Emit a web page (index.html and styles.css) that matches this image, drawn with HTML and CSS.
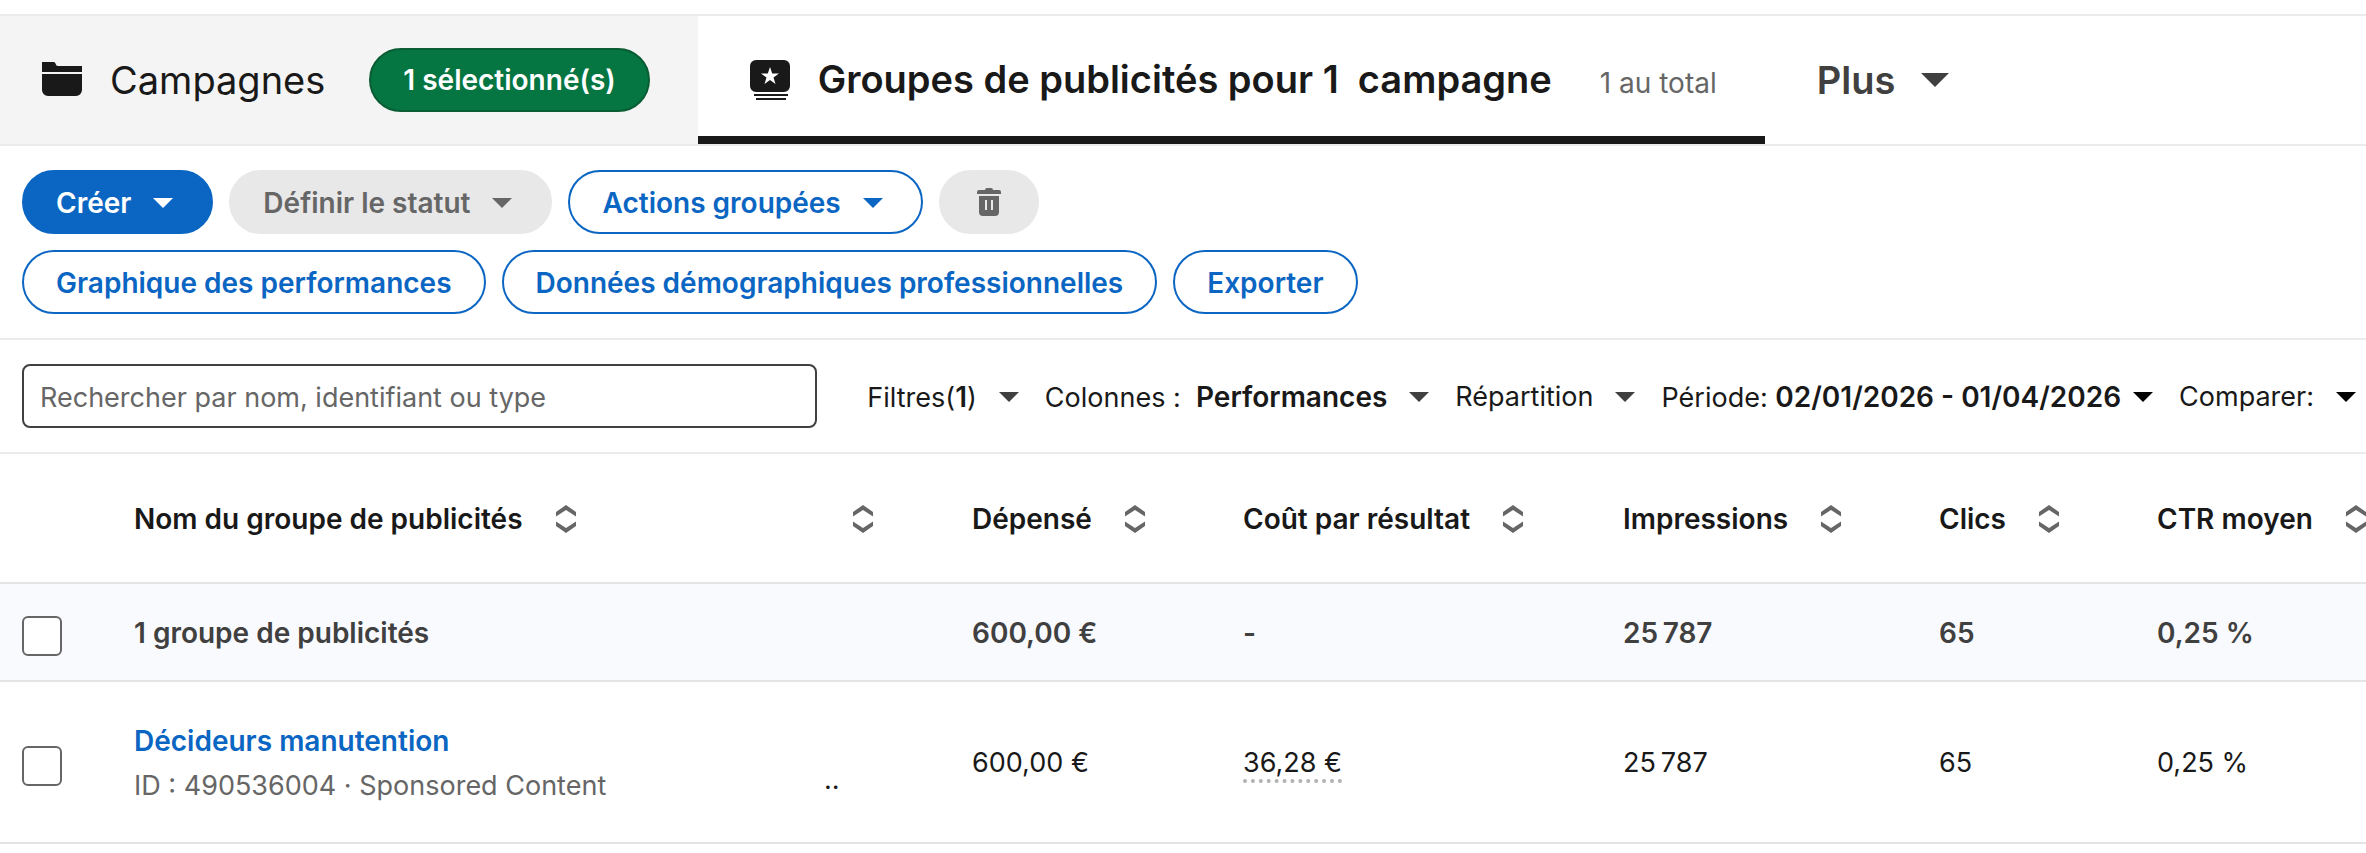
FILE: index.html
```html
<!DOCTYPE html>
<html lang="fr">

<head>
    <meta charset="UTF-8">
    <meta name="viewport" content="width=device-width, initial-scale=1.0">
    <title>Groupes de publicités</title>
    <link rel="stylesheet" href="styles.css">
</head>

<body>
    <!-- Icônes partagées -->
    <svg class="sprite" aria-hidden="true">
        <symbol id="caret" viewBox="0 0 20 10"><path d="M0 0h20L10 10z" /></symbol>
        <symbol id="sort" viewBox="0 0 22 28"><path d="M11 0l10 7v4.500L11 5 1 11.500V7zM11 28L1 21v-4.500L11 23l10-6.500V21z" /></symbol>
    </svg>

    <!-- Onglets -->
    <nav class="tabs">
        <a href="#" class="tab tab-campaigns">
            <svg class="tab-icon" viewBox="0 0 40 40"><path d="M0 2h12q1 0 1.500 1.500Q14 6 16 6h24v6H0zM0 14h40v16a6 6 0 0 1-6 6H6a6 6 0 0 1-6-6z" /></svg>
            <span class="tab-name">Campagnes</span>
            <span class="badge">1 sélectionné(s)</span>
        </a>
        <a href="#" class="tab tab-groups">
            <svg class="tab-icon" viewBox="0 0 40 40"><path fill-rule="evenodd" d="M6 0h28a6 6 0 0 1 6 6v20a6 6 0 0 1-6 6H6a6 6 0 0 1-6-6V6a6 6 0 0 1 6-6zM20 7l-2.200 6.500H11l5.500 4-2 6.500 5.500-4 5.500 4-2-6.500 5.500-4h-6.800z" /><path d="M4 34h34v2H4zM6 38h30v2H6z" /></svg>
            <span class="tab-label">
                <span class="tab-name">Groupes de publicités pour 1 &nbsp;campagne</span>
                <span class="total">1 au total</span>
            </span>
        </a>
        <button class="more">Plus <svg class="caret"><use href="#caret" /></svg></button>
    </nav>

    <!-- Barre d'actions -->
    <div class="toolbar">
        <div class="actions">
            <button class="btn btn-primary">Créer <svg class="caret"><use href="#caret" /></svg></button>
            <button class="btn" disabled>Définir le statut <svg class="caret"><use href="#caret" /></svg></button>
            <button class="btn">Actions groupées <svg class="caret"><use href="#caret" /></svg></button>
            <button class="btn" disabled aria-label="Supprimer">
                <svg class="trash" viewBox="0 0 32 32"><path fill-rule="evenodd" d="M12 3a2 2 0 0 1 2-2h4a2 2 0 0 1 2 2h6a2 2 0 0 1 2 2v2H4V5a2 2 0 0 1 2-2zM6 9h20v16a4 4 0 0 1-4 4H10a4 4 0 0 1-4-4zM12 13v10h2V13zM18 13v10h2V13z" /></svg>
            </button>
        </div>
        <div class="actions">
            <button class="btn">Graphique des performances</button>
            <button class="btn">Données démographiques professionnelles</button>
            <button class="btn">Exporter</button>
        </div>
    </div>

    <!-- Recherche et filtres -->
    <div class="filters">
        <input type="text" class="search" aria-label="Rechercher" placeholder="Rechercher par nom, identifiant ou type">
        <div class="filter-list">
            <button class="filter"><span>Filtres(<b>1</b>)</span><svg class="caret"><use href="#caret" /></svg></button>
            <button class="filter"><span>Colonnes : &nbsp;<b>Performances</b></span><svg class="caret"><use href="#caret" /></svg></button>
            <button class="filter"><span>Répartition</span><svg class="caret"><use href="#caret" /></svg></button>
            <button class="filter dark period"><span>Période: <b>02/01/2026 - 01/04/2026</b></span><svg class="caret"><use href="#caret" /></svg></button>
            <button class="filter dark"><span>Comparer:</span><svg class="caret"><use href="#caret" /></svg></button>
        </div>
    </div>

    <table class="report">
        <colgroup>
            <col class="col-check">
            <col class="col-name">
            <col class="col-status">
            <col class="col-spent">
            <col class="col-cost">
            <col class="col-impressions">
            <col class="col-clicks">
            <col class="col-ctr">
        </colgroup>
        <thead>
            <tr>
                <td></td>
                <th><button class="sort">Nom du groupe de publicités<svg><use href="#sort" /></svg></button></th>
                <th class="status"><button class="sort" aria-label="Trier"><svg><use href="#sort" /></svg></button></th>
                <th><button class="sort">Dépensé<svg><use href="#sort" /></svg></button></th>
                <th><button class="sort">Coût par résultat<svg><use href="#sort" /></svg></button></th>
                <th><button class="sort">Impressions<svg><use href="#sort" /></svg></button></th>
                <th><button class="sort">Clics<svg><use href="#sort" /></svg></button></th>
                <th><button class="sort">CTR moyen<svg><use href="#sort" /></svg></button></th>
            </tr>
        </thead>
        <tbody>
            <tr class="summary">
                <td><input type="checkbox" class="check" aria-label="Tout sélectionner"></td>
                <td>1 groupe de publicités</td>
                <td></td>
                <td>600,00 €</td>
                <td>-</td>
                <td>25&#8239;787</td>
                <td>65</td>
                <td>0,25 %</td>
            </tr>
            <tr class="item">
                <td><input type="checkbox" class="check" aria-label="Sélectionner Décideurs manutention"></td>
                <td>
                    <a href="#" class="group-name">Décideurs manutention</a>
                    <div class="group-id">ID : 490536004 · Sponsored Content</div>
                </td>
                <td class="dots">..</td>
                <td>600,00 €</td>
                <td><span class="hint">36,28 €</span></td>
                <td>25&#8239;787</td>
                <td>65</td>
                <td>0,25 %</td>
            </tr>
        </tbody>
    </table>
</body>

</html>
```
FILE: styles.css
```css
/* Base */
* {
    box-sizing: border-box;
}

body {
    margin: 0;
    padding-top: 14px;
    font-family: Inter, "Liberation Sans", sans-serif;
    font-size: 27px;
    line-height: 40px;
    color: #191919;
    background: #fff;
    overflow-x: hidden;
}

button,
input {
    font: inherit;
    color: inherit;
}

button {
    padding: 0;
    border: none;
    background: none;
    white-space: nowrap;
    cursor: pointer;
}

a {
    color: inherit;
    text-decoration: none;
}

b {
    font-size: 28px;
    font-weight: 600;
}

svg {
    flex: none;
    fill: currentColor;
}

.sprite {
    display: none;
}

.caret {
    width: 20px;
    height: 10px;
}

/* Onglets */
.tabs {
    display: flex;
    height: 132px;
    border-top: 2px solid #ebebeb;
    border-bottom: 2px solid #ebebeb;
}

.tab {
    display: flex;
    align-items: center;
    font-size: 38px;
    white-space: nowrap;
}

.tab-campaigns {
    padding: 0 48px 0 42px;
    background: #f4f4f4;
}

.tab-groups {
    padding: 8px 48px 0 52px;
    border-bottom: 8px solid #191919;
    font-weight: 600;
}

.tab-icon {
    width: 40px;
    height: 40px;
    margin-right: 28px;
}

.tab-label {
    display: flex;
    align-items: baseline;
    padding-top: 2px;
}

.badge {
    margin-left: 44px;
    padding: 10px 32px;
    border: 2px solid #0a5c33;
    border-radius: 32px;
    background: #057642;
    color: #fff;
    font-size: 28px;
    font-weight: 600;
}

.total {
    margin-left: 48px;
    color: #666;
    font-size: 28px;
    font-weight: 400;
}

.more {
    display: flex;
    align-items: center;
    gap: 26px;
    padding: 0 52px;
    color: #404040;
    font-size: 38px;
    font-weight: 600;
}

.more .caret {
    width: 28px;
    height: 14px;
}

/* Barre d'actions */
.toolbar {
    display: flex;
    flex-direction: column;
    gap: 16px;
    padding: 24px 22px;
    border-bottom: 2px solid #ebebeb;
}

.actions {
    display: flex;
    gap: 16px;
}

.btn {
    display: flex;
    align-items: center;
    gap: 22px;
    height: 64px;
    padding: 2px 32px 0;
    border: 2px solid #0a66c2;
    border-radius: 32px;
    color: #0a66c2;
    font-size: 28px;
    font-weight: 600;
}

.btn .caret {
    margin-right: 6px;
}

.btn-primary {
    background: #0a66c2;
    color: #fff;
}

.btn:disabled {
    border-color: #e8e8e8;
    background: #e8e8e8;
    color: #666;
}

.trash {
    width: 32px;
    height: 32px;
}

/* Recherche et filtres */
.filters {
    display: flex;
    align-items: center;
    gap: 50px;
    padding: 24px 10px 24px 22px;
    border-bottom: 2px solid #ebebeb;
}

.search {
    flex: 1;
    min-width: 0;
    height: 64px;
    padding: 2px 16px 0;
    border: 2px solid #404040;
    border-radius: 8px;
    background: #fff;
}

.search::placeholder {
    color: #666;
    opacity: 1;
}

.filter-list {
    display: flex;
    gap: 26px;
    padding-top: 2px;
}

.filter {
    display: flex;
    align-items: center;
    gap: 22px;
}

.filter .caret {
    color: #404040;
}

.filter.dark .caret {
    color: #000;
}

.filter.period {
    gap: 12px;
}

/* Tableau */
.report {
    width: 100%;
    table-layout: fixed;
    border-collapse: separate;
    border-spacing: 0;
}

.report th,
.report td {
    padding: 2px 0 0;
    border-bottom: 2px solid #e4e4e4;
    text-align: left;
    white-space: nowrap;
}

.report th {
    height: 130px;
}

.report tr > :first-child {
    padding-left: 22px;
}

.col-check { width: 134px; }
.col-name { width: 690px; }
.col-status { width: 148px; }
.col-spent { width: 271px; }
.col-cost { width: 380px; }
.col-impressions { width: 316px; }
.col-clicks { width: 218px; }

.sort {
    display: flex;
    align-items: center;
    gap: 32px;
    font-size: 28px;
    font-weight: 600;
}

.sort svg {
    width: 22px;
    height: 28px;
    color: #666;
}

.report .status {
    padding-left: 28px;
}

.summary td {
    height: 98px;
    background: #f9fafe;
    color: #404040;
    font-size: 28px;
    font-weight: 600;
}

.item td {
    height: 162px;
}

.check {
    display: block;
    width: 40px;
    height: 40px;
    margin: 6px 0 0;
    appearance: none;
    border: 2px solid #666;
    border-radius: 6px;
    background: #fff;
}

.group-name {
    color: #0a66c2;
    font-size: 28px;
    font-weight: 600;
}

.group-id {
    margin-top: 4px;
    color: #666;
}

.report .dots {
    padding-top: 36px;
}

.hint {
    border-bottom: 4px dotted #b2b2b2;
}
```
